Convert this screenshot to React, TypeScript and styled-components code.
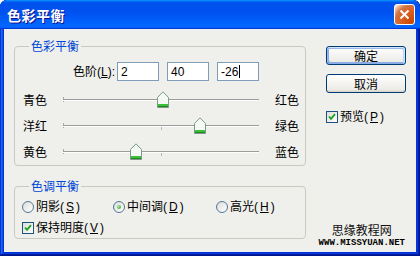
import React from "react";
import styled, { createGlobalStyle, css } from "styled-components";

const GlobalStyle = createGlobalStyle`
  html, body {
    margin: 0;
    padding: 0;
    background: #ffffff;
  }
  body {
    font-family: "Liberation Sans", "Noto Sans CJK SC", sans-serif;
    font-size: 12px;
    color: #000;
  }
`;

const Window = styled.div`
  width: 420px;
  height: 256px;
  display: flex;
  flex-direction: column;
  background: #0831d9;
  border-radius: 7px 7px 0 0;
  overflow: hidden;
  box-shadow: inset -1px -1px #00138c, inset 1px 1px #0831d9,
    inset -2px -2px #001ea0, inset 2px 2px #166aee, inset -3px -3px #003bda,
    inset 3px 3px #0855dd;
`;

const TitleBar = styled.div`
  flex: none;
  height: 29px;
  display: flex;
  align-items: center;
  justify-content: space-between;
  padding: 0 5px 0 7px;
  background: linear-gradient(
    180deg,
    #0997ff,
    #0053ee 8%,
    #0050ee 40%,
    #06f 88%,
    #06f 93%,
    #005bff 95%,
    #003dd7 96%,
    #003dd7
  );
  border-radius: 7px 7px 0 0;
`;

const TitleText = styled.span`
  color: #fff;
  font-family: "Noto Sans CJK SC", sans-serif;
  font-weight: bold;
  font-size: 14px;
  letter-spacing: 0.5px;
  text-shadow: 1px 1px #0f1089;
`;

const CloseButton = styled.div`
  width: 19px;
  height: 19px;
  border: 1px solid #fff;
  border-radius: 3px;
  display: flex;
  align-items: center;
  justify-content: center;
  background: radial-gradient(
    circle at 90% 90%,
    #cc4600 0%,
    #dc6527 55%,
    #cd7546 70%,
    #ffccb2 90%,
    #fff 100%
  );
`;

const Client = styled.div`
  flex: 1;
  margin: 0 4px 4px;
  padding: 9px 10px 0;
  display: flex;
  gap: 20px;
  background: #efefeb;
  position: relative;
`;

const LeftColumn = styled.div`
  width: 292px;
  display: flex;
  flex-direction: column;
`;

const Group = styled.fieldset<{ $gap?: number }>`
  margin: ${(p) => p.$gap ?? 0}px 0 0;
  padding: 0;
  border: 1px solid #c9c9c0;
  border-radius: 4px;
  min-width: 0;
`;

const GroupTitle = styled.legend`
  margin-left: 14px;
  padding: 0 2px;
  color: #0046d5;
  font-family: "Noto Sans CJK SC", sans-serif;
  font-size: 12px;
  line-height: 16px;
`;

const LevelRow = styled.div`
  margin-top: 8px;
  height: 19px;
  display: flex;
  align-items: center;
`;

const LevelLabel = styled.span`
  width: 100px;
  margin-right: 2px;
  text-align: right;
  line-height: 16px;
`;

const Fields = styled.div`
  display: flex;
  gap: 8px;
`;

const Field = styled.div`
  box-sizing: border-box;
  width: 42px;
  height: 19px;
  padding-left: 3px;
  border: 1px solid #7f9db9;
  background: #fff;
  display: flex;
  align-items: center;
  font-size: 12px;
`;

const Caret = styled.span`
  width: 1px;
  height: 13px;
  margin-left: 1px;
  background: #000;
`;

const Sliders = styled.div`
  margin-top: 6px;
`;

const SliderRow = styled.div`
  height: 26px;
  display: grid;
  grid-template-columns: 40px 196px 1fr;
  align-items: center;
  padding-left: 8px;
`;

const SideLabel = styled.span<{ $right?: boolean }>`
  line-height: 16px;
  font-family: "Noto Sans CJK SC", sans-serif;
  ${(p) =>
    p.$right &&
    css`
      padding-left: 16px;
    `}
`;

const Track = styled.div`
  position: relative;
  height: 26px;
  background:
    linear-gradient(#9c9c9c, #9c9c9c) 0 12px / 100% 1px no-repeat,
    linear-gradient(#ffffff, #ffffff) 0 13px / 100% 1px no-repeat,
    linear-gradient(#a8a8a8, #a8a8a8) 0 10px / 1px 5px no-repeat,
    linear-gradient(#b8b8b8, #b8b8b8) 98px 12px / 1px 5px no-repeat;
`;

const Thumb = styled.svg`
  position: absolute;
  top: 4px;
  width: 12px;
  height: 17px;
`;

const RightColumn = styled.div`
  width: 80px;
  padding-top: 8px;
  display: flex;
  flex-direction: column;
`;

const Button = styled.div<{ $default?: boolean }>`
  box-sizing: border-box;
  height: 19px;
  margin-bottom: 9px;
  border: 1px solid #003c74;
  border-radius: 3px;
  display: flex;
  align-items: center;
  justify-content: center;
  font-family: "Noto Sans CJK SC", sans-serif;
  font-size: 12px;
  background: linear-gradient(180deg, #fff, #ecebe6 86%, #d6d0c5);
  ${(p) =>
    p.$default &&
    css`
      box-shadow: inset -1px 1px #cee7ff, inset 1px 2px #98b8ea,
        inset -2px 2px #bcd4f6, inset 1px -1px #89ade4,
        inset 2px -2px #89ade4;
    `}
`;

const Option = styled.label<{ $top?: number }>`
  display: flex;
  align-items: center;
  gap: 2px;
  height: 16px;
  margin-top: ${(p) => p.$top ?? 0}px;
  line-height: 16px;
`;

const CheckBox = styled.span`
  box-sizing: border-box;
  width: 12px;
  height: 12px;
  border: 1px solid #1c5180;
  background: linear-gradient(135deg, #dcdcd7, #fff);
  display: flex;
  align-items: center;
  justify-content: center;
`;

const Radio = styled.span<{ $on?: boolean }>`
  box-sizing: border-box;
  width: 12px;
  height: 12px;
  border: 1px solid #52769c;
  border-radius: 50%;
  background: linear-gradient(135deg, #dcdcd7, #fff);
  display: flex;
  align-items: center;
  justify-content: center;
  &::after {
    content: "";
    width: 4px;
    height: 4px;
    border-radius: 50%;
    background: ${(p) =>
      p.$on ? "radial-gradient(circle at 35% 35%, #a8e5a8, #21a121)" : "transparent"};
  }
`;

const RadioRow = styled.div`
  margin-top: 5px;
  padding-left: 7px;
  display: grid;
  grid-template-columns: 91px 103px auto;
`;

const CheckRow = styled.div`
  margin: 5px 0 2px;
  padding-left: 7px;
`;

const Key = styled.u`
  text-underline-offset: 1px;
`;

const Watermark = styled.div`
  position: absolute;
  right: 11px;
  bottom: 5px;
  display: flex;
  flex-direction: column;
  align-items: center;
`;

const MarkTitle = styled.span`
  font-family: "Noto Sans CJK SC", sans-serif;
  font-size: 12px;
  line-height: 14px;
  color: #111;
`;

const MarkUrl = styled.span`
  margin-top: 2px;
  font-family: "Liberation Mono", monospace;
  font-weight: bold;
  font-size: 9px;
  line-height: 8px;
  color: #000;
`;

const Check = () => (
  <svg width="8" height="8" viewBox="0 0 8 8">
    <path d="M1 3.5 L3 5.8 L7 1.2" fill="none" stroke="#21a121" strokeWidth="1.8" />
  </svg>
);

const sliders = [
  { left: "青色", right: "红色", value: 2 },
  { left: "洋红", right: "绿色", value: 40 },
  { left: "黄色", right: "蓝色", value: -26 },
];

const TRACK = 196;

export default function App() {
  return (
    <>
      <GlobalStyle />
      <Window>
        <TitleBar>
          <TitleText>色彩平衡</TitleText>
          <CloseButton>
            <svg width="11" height="11" viewBox="0 0 11 11">
              <path d="M1.5 1.5 L9.5 9.5 M9.5 1.5 L1.5 9.5" stroke="#fff" strokeWidth="2" />
            </svg>
          </CloseButton>
        </TitleBar>
        <Client>
          <LeftColumn>
            <Group>
              <GroupTitle>色彩平衡</GroupTitle>
              <LevelRow>
                <LevelLabel>
                  色阶(<Key>L</Key>):
                </LevelLabel>
                <Fields>
                  <Field>2</Field>
                  <Field>40</Field>
                  <Field>
                    -26
                    <Caret />
                  </Field>
                </Fields>
              </LevelRow>
              <Sliders>
                {sliders.map((s) => (
                  <SliderRow key={s.left}>
                    <SideLabel>{s.left}</SideLabel>
                    <Track>
                      <Thumb
                        viewBox="0 0 12 17"
                        style={{ left: Math.round(((s.value + 100) / 200) * TRACK) - 6 }}
                      >
                        <path
                          d="M0.5 6.5 L6 0.8 L11.5 6.5 V16.5 H0.5 Z"
                          fill="#f4f9f4"
                          stroke="#7f988c"
                        />
                        <rect x="1" y="13" width="10" height="2" fill="#3cbf3c" />
                        <rect x="1" y="15" width="10" height="1" fill="#1e8a1e" />
                      </Thumb>
                    </Track>
                    <SideLabel $right>{s.right}</SideLabel>
                  </SliderRow>
                ))}
              </Sliders>
            </Group>
            <Group $gap={12}>
              <GroupTitle>色调平衡</GroupTitle>
              <RadioRow>
                <Option>
                  <Radio />
                  阴影(<Key>S</Key>)
                </Option>
                <Option>
                  <Radio $on />
                  中间调(<Key>D</Key>)
                </Option>
                <Option>
                  <Radio />
                  高光(<Key>H</Key>)
                </Option>
              </RadioRow>
              <CheckRow>
                <Option>
                  <CheckBox>
                    <Check />
                  </CheckBox>
                  保持明度(<Key>V</Key>)
                </Option>
              </CheckRow>
            </Group>
          </LeftColumn>
          <RightColumn>
            <Button $default>确定</Button>
            <Button>取消</Button>
            <Option $top={7}>
              <CheckBox>
                <Check />
              </CheckBox>
              预览(<Key>P</Key>)
            </Option>
          </RightColumn>
          <Watermark>
            <MarkTitle>思缘教程网</MarkTitle>
            <MarkUrl>WWW.MISSYUAN.NET</MarkUrl>
          </Watermark>
        </Client>
      </Window>
    </>
  );
}
